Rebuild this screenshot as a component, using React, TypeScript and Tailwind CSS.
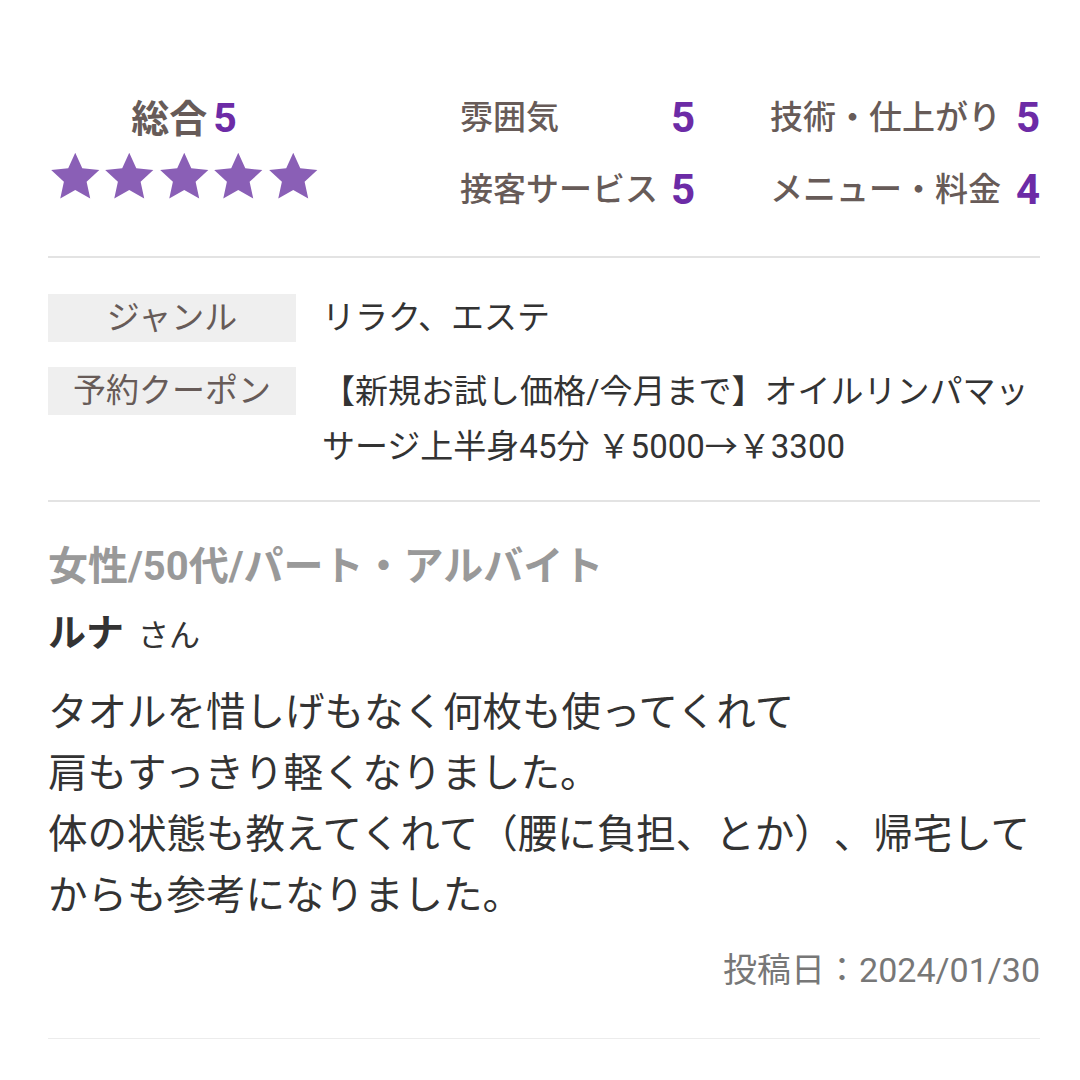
const font = { fontFamily: 'Roboto, "Noto Sans CJK JP", sans-serif' };

function Star() {
  return (
    <svg viewBox="0 0 24 24" className="h-[54.5px] w-[54.5px]">
      <path
        d="M12 1.6l3.1 6.9 7.5.8-5.6 5.1 1.6 7.4L12 18l-6.6 3.8 1.6-7.4-5.6-5.1 7.5-.8z"
        fill="#8a5fb6"
      />
    </svg>
  );
}

const scores = [
  { label: '雰囲気', value: 5 },
  { label: '技術・仕上がり', value: 5 },
  { label: '接客サービス', value: 5 },
  { label: 'メニュー・料金', value: 4 },
];

export default function App() {
  return (
    <div
      className="min-h-[1080px] w-[1080px] bg-white pl-[48px] pr-[40px] pt-[96px] text-[#333] [text-spacing-trim:space-all]"
      style={font}
    >
      {/* rating summary */}
      <div className="flex pb-[44px]">
        <div className="flex w-[272px] flex-col items-center">
          <div className="flex items-baseline font-bold leading-[44px]">
            <span className="text-[38px] text-[#675b58]">総合</span>
            <span className="ml-[6px] text-[41px] text-[#6c2ba6]">5</span>
          </div>
          <div className="mt-[8px] flex">
            {[0, 1, 2, 3, 4].map((i) => (
              <Star key={i} />
            ))}
          </div>
        </div>
        <div className="ml-[140px] grid flex-1 grid-cols-[235px_1fr] gap-x-[75px] gap-y-[28px]">
          {scores.map((s) => (
            <div key={s.label} className="flex items-center justify-between">
              <span className="text-[33px] font-medium leading-[44px] text-[#675b58]">{s.label}</span>
              <span className="text-[42px] font-bold leading-[44px] text-[#6c2ba6]">{s.value}</span>
            </div>
          ))}
        </div>
      </div>

      <div className="h-[2px] bg-[#e3e3e3]" />

      {/* genre / coupon */}
      <div className="flex flex-col gap-[25px] pb-[26px] pt-[36px]">
        <div className="flex items-start">
          <div className="flex h-[48px] w-[248px] shrink-0 items-center justify-center bg-[#efefef] text-[33px] text-[#675b58]">
            ジャンル
          </div>
          <div className="pl-[26px] text-[33px] leading-[48px]">リラク、エステ</div>
        </div>
        <div className="flex items-start">
          <div className="flex h-[48px] w-[248px] shrink-0 items-center justify-center bg-[#efefef] text-[33px] text-[#675b58]">
            予約クーポン
          </div>
          <div className="-mt-[3px] pl-[26px] text-[33px] leading-[55px]">
            【新規お試し価格/今月まで】オイルリンパマッサージ上半身45分 ￥5000→￥3300
          </div>
        </div>
      </div>

      <div className="h-[2px] bg-[#e3e3e3]" />

      {/* review */}
      <div className="pt-[39px]">
        <div className="text-[40px] font-bold leading-[52px] text-[#999]">女性/50代/パート・アルバイト</div>
        <div className="mt-[14px] flex items-baseline leading-[52px]">
          <span className="text-[38px] font-bold text-[#333]">ルナ</span>
          <span className="ml-[14px] text-[31px] text-[#333]">さん</span>
        </div>
        <p className="mt-[20px] text-[39.5px] leading-[61px] text-[#333]">
          タオルを惜しげもなく何枚も使ってくれて
          <br />
          肩もすっきり軽くなりました。
          <br />
          体の状態も教えてくれて（腰に負担、とか）、帰宅して
          <br />
          からも参考になりました。
        </p>
        <div className="mt-[24px] text-right text-[34px] leading-[40px] text-[#777]">投稿日：2024/01/30</div>
      </div>

      <div className="mt-[48px] h-[1px] bg-[#ececec]" />
    </div>
  );
}
